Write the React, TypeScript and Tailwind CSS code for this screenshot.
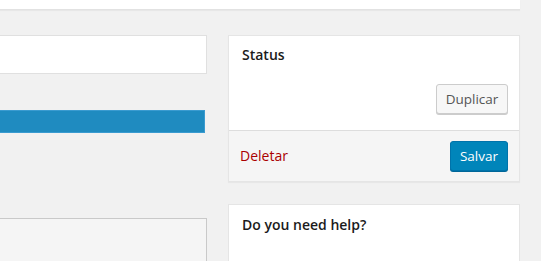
import * as React from "react";

export default function App() {
    return (
        <div
            className="w-[541px] h-[261px] overflow-hidden bg-[#f1f1f1] text-[14px] text-[#23282d]"
            style={{ fontFamily: '"Open Sans", "Noto Sans", sans-serif' }}
        >
            {/* Top panel, cut off above */}
            <div className="w-[520px] h-[10px] bg-white border-b border-[#e2e2e2] shadow-[0_1px_1px_rgba(0,0,0,0.04)]" />

            <div className="flex mt-[25px] gap-[21px]">
                {/* Left column, cut off on the left */}
                <div className="w-[207px] flex flex-col">
                    <div className="h-[39px] bg-white border border-l-0 border-[#e0e0e0]" />
                    <div className="mt-[36px] mr-[2px] h-[23px] bg-[#1f8bc0] border border-l-0 border-[#3a9bd0]" />
                    <div className="mt-[85px] h-[60px] bg-[#f5f5f5] border border-l-0 border-[#c9c9c9]" />
                </div>

                {/* Right column */}
                <div className="w-[292px] flex flex-col">
                    <div className="bg-white border border-[#e5e5e5] shadow-[0_1px_1px_rgba(0,0,0,0.04)]">
                        <div className="pl-[13px] pr-[11px] pt-[9px] pb-[16px]">
                            <h2 className="font-semibold leading-[20px] text-[#1b1b1b]">Status</h2>
                            <div className="flex justify-end mt-[19px]">
                                <button className="h-[30px] w-[72px] rounded-[3px] border border-[#cccccc] bg-[#f7f7f7] text-[13.5px] text-[#555555] shadow-[0_1px_0_#cccccc]">
                                    Duplicar
                                </button>
                            </div>
                        </div>
                        <div className="h-[51px] flex items-center justify-between pl-[11px] pr-[11px] bg-[#f5f5f5] border-t border-[#dddddd]">
                            <span className="text-[#a00] leading-none">Deletar</span>
                            <button className="h-[30px] w-[58px] rounded-[3px] border border-[#0073aa] bg-[#0085ba] text-[13.5px] text-white shadow-[0_1px_0_#006799]">
                                Salvar
                            </button>
                        </div>
                    </div>

                    <div className="mt-[22px] h-[80px] bg-white border border-[#e5e5e5] px-[13px] pt-[10px]">
                        <h2 className="font-semibold leading-[20px] text-[#1b1b1b]">Do you need help?</h2>
                    </div>
                </div>
            </div>
        </div>
    );
}
